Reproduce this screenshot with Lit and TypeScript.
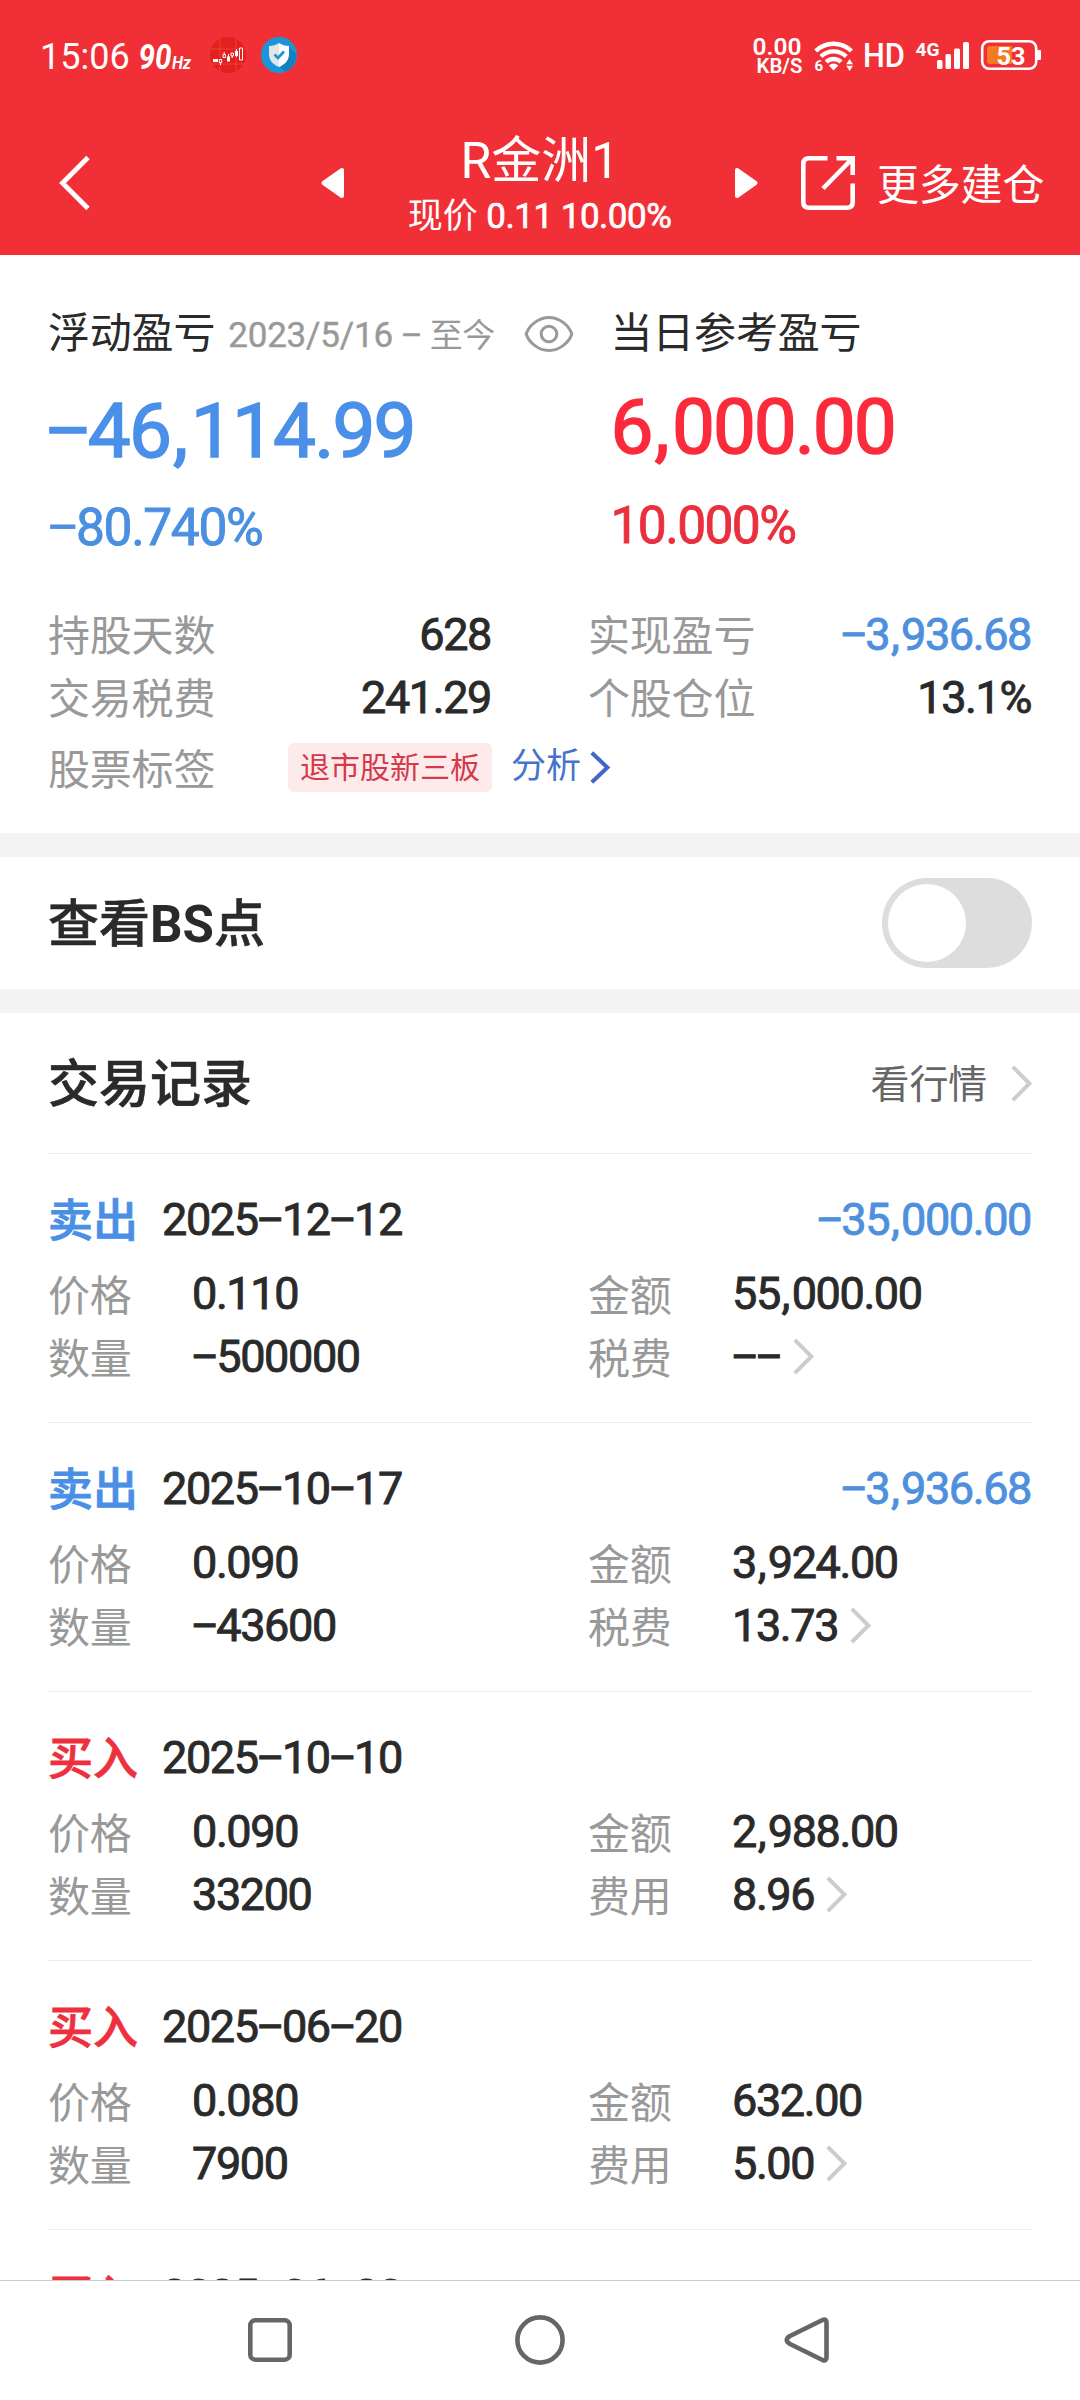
import { LitElement, html, css, svg, nothing } from "lit";
import { customElement, property } from "lit/decorators.js";

interface Trade {
  side: "sell" | "buy";
  date: string;
  profit?: string;
  price: string;
  amount: string;
  count: string;
  feeLabel: string;
  fee: string;
}

const TRADES: Trade[] = [
  { side: "sell", date: "2025−12−12", profit: "−35,000.00", price: "0.110", amount: "55,000.00", count: "−500000", feeLabel: "税费", fee: "−−" },
  { side: "sell", date: "2025−10−17", profit: "−3,936.68", price: "0.090", amount: "3,924.00", count: "−43600", feeLabel: "税费", fee: "13.73" },
  { side: "buy", date: "2025−10−10", price: "0.090", amount: "2,988.00", count: "33200", feeLabel: "费用", fee: "8.96" },
  { side: "buy", date: "2025−06−20", price: "0.080", amount: "632.00", count: "7900", feeLabel: "费用", fee: "5.00" },
  { side: "buy", date: "2025−06−20", price: "0.080", amount: "632.00", count: "7900", feeLabel: "费用", fee: "5.00" },
];

const base = css`
  * { box-sizing: border-box; }
  :host {
    display: block;
    font-family: Roboto, "Noto Sans CJK SC", sans-serif;
    color: #2a2a2a;
    white-space: nowrap;
  }
  svg { display: block; flex: none; overflow: visible; }
  .dash { font-family: "Noto Sans", sans-serif; line-height: 0; }
  .comma { padding: 0 0.06em 0 0.04em; }
`;

const chevron = (w: number, h: number, color: string, sw: number) => html`
  <svg width=${w} height=${h} viewBox="0 0 ${w} ${h}">
    <path d="M1.8 1.8L${w - 2.6} ${h / 2}L1.8 ${h - 1.8}" fill="none" stroke=${color} stroke-width=${sw} />
  </svg>`;

// Sets the minus signs of a figure in the wider dash face and opens up its commas.
const figure = (s: string) =>
  s.split(/([−,])/).filter((p) => p).map((p) =>
    p === "−" ? html`<span class="dash">−</span>` : p === "," ? html`<span class="comma">,</span>` : p);

@customElement("status-bar")
class StatusBar extends LitElement {
  static styles = [base, css`
    :host { height: 110px; color: #fff; }
    .bar { display: flex; height: 110px; align-items: center; padding-left: 40px; }
    .time { font-size: 36px; line-height: 44px; width: 98px; padding-top: 3px; }
    .hz { margin-right: 17px; }
    .app { margin-right: 15px; }
    .spacer { flex: 1; }
    text { fill: #fff; font-family: Roboto, sans-serif; font-weight: 500; }
    .s { font-weight: 600; }
    .b { font-weight: 700; }
    .i { font-style: italic; font-weight: 700; }
  `];

  render() {
    return html`
      <div class="bar">
        <div class="time">15:06</div>
        <svg class="hz" width="55" height="36" viewBox="138 37 55 36">
          <text class="i" x="138.5" y="69" font-size="35" textLength="33" lengthAdjust="spacingAndGlyphs">90</text>
          <text class="i" x="172" y="69" font-size="18" textLength="19" lengthAdjust="spacingAndGlyphs">Hz</text>
        </svg>
        <svg class="app" width="36" height="38" viewBox="0 0 36 38">
          <circle cx="18" cy="19" r="18" fill="#e2211f" />
          <path d="M1 13H35M2 28H34M10 3V35M26 3V35" stroke="#f0463f" stroke-width="0.8" />
          <path d="M3 23h5v3H3zM17 20.500h3v5h-3zM25 15h3v5h-3z" fill="#fff" />
          <path d="M9.300 23.500h2.400v3h-2.400zM13 18.500h2.400v3h-2.400zM21 17h2.400v3H21zM29.500 12h3v12h-3z" fill="none" stroke="#fff" />
          <path d="M14.200 16v2M22.200 20v2M10.500 27v2M18.500 18v3M26.500 13v8" stroke="#fff" />
        </svg>
        <svg width="36" height="38" viewBox="0 0 36 38">
          <circle cx="18" cy="19" r="18" fill="#1996d8" />
          <path d="M28 11L35.500 18Q35 31 24 36L18 30Z" fill="#1380c0" />
          <path d="M18 7C15 9 12 9.800 8 10V18C8 25 13 29 18 31Z" fill="#e3e6e8" />
          <path d="M18 7C21 9 24 9.800 28 10V18C28 25 23 29 18 31Z" fill="#fff" />
          <path d="M13.500 18.500L17 22L23 15.500" fill="none" stroke="#2494cf" stroke-width="2.800" />
        </svg>
        <div class="spacer"></div>
        <svg width="330" height="44" viewBox="750 33 330 44">
          <text class="s" x="752.500" y="54.500" font-size="24" textLength="49" lengthAdjust="spacingAndGlyphs">0.00</text>
          <text class="s" x="756.500" y="73" font-size="20" textLength="46" lengthAdjust="spacingAndGlyphs">KB/S</text>
          <g fill="none" stroke="#fff" stroke-width="4.400">
            <path d="M815.800 51A25.500 25.500 0 0 1 851.400 51" />
            <path d="M821 56.500A18 18 0 0 1 846.200 56.500" />
            <path d="M826.200 62A10.500 10.500 0 0 1 841 62" />
          </g>
          <path d="M833.600 70.500L828.800 65.500Q833.600 61.500 838.400 65.500Z" fill="#fff" />
          <text class="b" x="814.500" y="71" font-size="15">6</text>
          <path d="M849.600 59L853 64.200H846.200ZM849.600 71L853 65.800H846.200Z" fill="#fff" />
          <text x="863" y="67" font-size="33.500" textLength="42" lengthAdjust="spacingAndGlyphs">HD</text>
          <text class="b" x="915.500" y="56" font-size="19" textLength="24" lengthAdjust="spacingAndGlyphs">4G</text>
          <g fill="#fff">
            <rect x="937" y="60" width="5.500" height="9" rx="1.500" />
            <rect x="945.500" y="54" width="5.500" height="15" rx="1.500" />
            <rect x="954" y="48.500" width="6" height="20.500" rx="1.500" />
            <rect x="963" y="42" width="6" height="27" rx="1.500" />
          </g>
          <rect x="982.200" y="41.200" width="54" height="27.600" rx="7" fill="none" stroke="#fff" stroke-width="2.600" />
          <rect x="1037" y="50" width="4" height="10" rx="1" fill="#fff" />
          <path d="M990 46H1012V64H990Q987 64 987 61V49Q987 46 990 46Z" fill="#f47a24" />
          <text class="b" x="996.500" y="65" font-size="26.500" textLength="29" lengthAdjust="spacingAndGlyphs">53</text>
        </svg>
      </div>`;
  }
}

@customElement("title-bar")
class TitleBar extends LitElement {
  static styles = [base, css`
    :host { height: 144px; color: #fff; }
    .bar { display: flex; height: 144px; padding-left: 58px; }
    .back { margin-top: 45px; margin-right: 228px; }
    .tri { margin-top: 56px; }
    .title { width: 387px; padding-top: 21px; text-align: center; }
    .name { font-size: 50px; line-height: 60px; padding-left: 1px; }
    .price { font-size: 35px; line-height: 52px; letter-spacing: -0.5px; -webkit-text-stroke: 0.7px currentColor; }
    .price .cn { -webkit-text-stroke: 0; letter-spacing: 0; }
    .share { margin: 45px 21px 0 41px; }
    .more { font-size: 42px; line-height: 60px; margin-top: 46px; letter-spacing: -0.2px; }
  `];

  render() {
    return html`
      <div class="bar">
        <svg class="back" width="34" height="56" viewBox="0 0 34 56">
          <path d="M30 2.500L4.500 28L30 53.500" fill="none" stroke="#fff" stroke-width="4.800" />
        </svg>
        <svg class="tri" width="26" height="34" viewBox="0 0 26 34">
          <path d="M22 4V30L3.500 17Z" fill="#fff" stroke="#fff" stroke-width="4" stroke-linejoin="round" />
        </svg>
        <div class="title">
          <div class="name">R金洲1</div>
          <div class="price"><span class="cn">现价 </span>0.11 10.00%</div>
        </div>
        <svg class="tri" width="26" height="34" viewBox="0 0 26 34">
          <path d="M4 4V30L22.500 17Z" fill="#fff" stroke="#fff" stroke-width="4" stroke-linejoin="round" />
        </svg>
        <svg class="share" width="56" height="56" viewBox="0 0 56 56">
          <g fill="none" stroke="#fff" stroke-width="4.600">
            <path d="M27.500 3.300H9Q3.300 3.300 3.300 9V47Q3.300 52.700 9 52.700H47Q52.700 52.700 52.700 47V28.500" />
            <path d="M36.500 3.300H52.700V20M52 4L23 33.500" />
          </g>
        </svg>
        <div class="more">更多建仓</div>
      </div>`;
  }
}

@customElement("profit-summary")
class ProfitSummary extends LitElement {
  static styles = [base, css`
    .wrap { height: 578px; padding: 49px 48px 0; }
    .top { display: flex; height: 257px; }
    .left { width: 562.5px; }
    .head { display: flex; align-items: center; height: 60px; font-size: 42px; line-height: 60px; letter-spacing: -0.2px; }
    .range { font-size: 35px; line-height: 60px; color: #999; margin: 4px 0 0 13px; width: 274px; letter-spacing: -0.2px; -webkit-text-stroke: 0.4px currentColor; }
    .range .cn { font-size: 33px; letter-spacing: -0.5px; -webkit-text-stroke: 0; }
    .eye { margin-left: 22px; }
    .big { font-size: 76.500px; line-height: 96px; letter-spacing: -1.900px; margin-top: 19px; -webkit-text-stroke: 1.5px currentColor; }
    .pct { font-size: 51.500px; line-height: 66px; letter-spacing: -1.400px; margin-top: 16px; -webkit-text-stroke: 0.9px currentColor; }
    .left .big { margin-left: -2px; }
    .right .big { margin-top: 15px; letter-spacing: -2.100px; }
    .right .pct { margin-top: 18px; letter-spacing: -1.600px; }
    .blue { color: #4a8fe8; }
    .red { color: #fb2b3c; }
    .pct.blue { color: #4b8fe0; }
    .pct.red { color: #ea303f; }
    .stats { display: flex; justify-content: space-between; margin-top: 42px; }
    .col1 { width: 444px; }
    .col2 { width: 443px; }
    .row { display: flex; justify-content: space-between; height: 63px; line-height: 63px; }
    .label { font-size: 42px; color: #999; letter-spacing: -0.2px; padding-top: 2px; }
    .col2 .label { margin-left: -1px; }
    .value { font-size: 45px; letter-spacing: -1.400px; padding-right: 1px; -webkit-text-stroke: 0.9px currentColor; }
    .value.blue { color: #4f90de; }
    .tags { display: flex; align-items: center; height: 52px; margin-top: 12px; }
    .tags .label { width: 240px; padding: 0; margin-top: -1px; }
    .tag { height: 49px; width: 204px; border-radius: 6px; background: #fdebec; color: #d5394a; font-size: 30px; line-height: 49px; text-align: center; }
    .link { display: flex; align-items: center; color: #4673cc; font-size: 35px; line-height: 50px; margin-left: 19px; gap: 9px; }
  `];

  render() {
    return html`
      <div class="wrap">
        <div class="top">
          <div class="left">
            <div class="head">
              <span>浮动盈亏</span>
              <span class="range">2023/5/16 ${figure("−")} <span class="cn">至今</span></span>
              <svg class="eye" width="50" height="38" viewBox="0 0 50 38">
                <g fill="none" stroke="#999" stroke-width="3">
                  <path d="M2.200 19C5 10 15 2.500 25 2.500S45 10 47.800 19C45 28 35 35.500 25 35.500S5 28 2.200 19Z" />
                  <circle cx="25" cy="19" r="7.800" />
                </g>
              </svg>
            </div>
            <div class="big blue">${figure("−46,114.99")}</div>
            <div class="pct blue">${figure("−80.740%")}</div>
          </div>
          <div class="right">
            <div class="head">当日参考盈亏</div>
            <div class="big red">${figure("6,000.00")}</div>
            <div class="pct red">10.000%</div>
          </div>
        </div>
        <div class="stats">
          <div class="col1">
            <div class="row"><span class="label">持股天数</span><span class="value">628</span></div>
            <div class="row"><span class="label">交易税费</span><span class="value">241.29</span></div>
          </div>
          <div class="col2">
            <div class="row"><span class="label">实现盈亏</span><span class="value blue">${figure("−3,936.68")}</span></div>
            <div class="row"><span class="label">个股仓位</span><span class="value">13.1%</span></div>
          </div>
        </div>
        <div class="tags">
          <span class="label">股票标签</span>
          <span class="tag">退市股新三板</span>
          <span class="link">分析${chevron(20, 33, "#4467c6", 4)}</span>
        </div>
      </div>`;
  }
}

@customElement("trade-record")
class TradeRecord extends LitElement {
  @property({ attribute: false }) trade!: Trade;

  static styles = [base, css`
    .rec { height: 269px; border-top: 1px solid #ececec; padding-top: 35px; }
    .head { display: flex; height: 62px; line-height: 62px; font-size: 45px; }
    .side { width: 114px; font-weight: 500; padding-top: 2px; -webkit-text-stroke: 0.8px currentColor; }
    .sell { color: #4a8fe6; }
    .buy { color: #ee2f3e; }
    .num { font-size: 45px; letter-spacing: -1.400px; -webkit-text-stroke: 0.9px currentColor; }
    .date { flex: 1; }
    .profit { color: #4f90de; padding-right: 1px; }
    .grid { display: grid; grid-template-columns: 144px 396px 144px 1fr; grid-auto-rows: 63px; line-height: 63px; margin-top: 11px; }
    .label { font-size: 42px; color: #999; padding-top: 3px; letter-spacing: -0.3px; }
    .fee { display: flex; align-items: center; gap: 12px; }
  `];

  render() {
    const t = this.trade;
    return html`
      <div class="rec">
        <div class="head">
          <span class="side ${t.side}">${t.side === "sell" ? "卖出" : "买入"}</span>
          <span class="num date">${figure(t.date)}</span>
          ${t.profit ? html`<span class="num profit">${figure(t.profit)}</span>` : nothing}
        </div>
        <div class="grid">
          <span class="label">价格</span><span class="num">${t.price}</span>
          <span class="label">金额</span><span class="num">${figure(t.amount)}</span>
          <span class="label">数量</span><span class="num">${figure(t.count)}</span>
          <span class="label">${t.feeLabel}</span>
          <span class="fee"><span class="num">${figure(t.fee)}</span>${chevron(21, 37, "#ccc", 4)}</span>
        </div>
      </div>`;
  }
}

@customElement("app-root")
class AppRoot extends LitElement {
  static styles = [base, css`
    :host { width: 1080px; height: 2400px; overflow: hidden; background: #fff; }
    .page { display: flex; flex-direction: column; height: 2400px; }
    .header { background: #f12f37; height: 255px; flex: none; }
    .main { flex: 1; min-height: 0; overflow: hidden; }
    .gap { height: 24px; background: #f4f4f4; }
    .bs { display: flex; justify-content: space-between; align-items: center; height: 132px; padding: 0 48px; }
    .h { font-size: 51px; line-height: 70px; font-weight: 500; padding-top: 4px; -webkit-text-stroke: 0.6px currentColor; }
    .h b { font-weight: 700; -webkit-text-stroke: 0; }
    .toggle { width: 150px; height: 90px; border-radius: 45px; background: #ddd; padding: 6px; }
    .knob { width: 78px; height: 78px; border-radius: 50%; background: #fff; }
    .records { padding: 0 48px; }
    .rhead { display: flex; justify-content: space-between; align-items: center; height: 140px; }
    .quote { display: flex; align-items: center; gap: 24px; font-size: 39px; color: #666; line-height: 60px; letter-spacing: -0.200px; }
    .quote span { padding-top: 3px; }
    .nav { height: 120px; flex: none; border-top: 1px solid #ccc; background: #fff; display: flex; justify-content: space-between; align-items: center; padding: 0 242px 1px; }
  `];

  render() {
    return html`
      <div class="page">
        <div class="header">
          <status-bar></status-bar>
          <title-bar></title-bar>
        </div>
        <div class="main">
          <profit-summary></profit-summary>
          <div class="gap"></div>
          <div class="bs">
            <div class="h">查看<b>BS</b>点</div>
            <div class="toggle"><div class="knob"></div></div>
          </div>
          <div class="gap"></div>
          <div class="records">
            <div class="rhead">
              <div class="h">交易记录</div>
              <div class="quote"><span>看行情</span>${chevron(21, 37, "#ccc", 4)}</div>
            </div>
            ${TRADES.map((t) => html`<trade-record .trade=${t}></trade-record>`)}
          </div>
        </div>
        <div class="nav">
          ${[
            svg`<rect x="8.300" y="8.300" width="39.400" height="39.400" rx="5" />`,
            svg`<circle cx="28" cy="28" r="22.600" />`,
            svg`<path d="M40.500 8L8 24Q1.500 28 8 32L40.500 48Q44.500 49.500 44.500 45.500V10.500Q44.500 6.500 40.500 8Z" />`,
          ].map((s) => html`<svg width="56" height="56" viewBox="0 0 56 56"><g fill="none" stroke="#666" stroke-width="4.600" stroke-linejoin="round">${s}</g></svg>`)}
        </div>
      </div>`;
  }
}
